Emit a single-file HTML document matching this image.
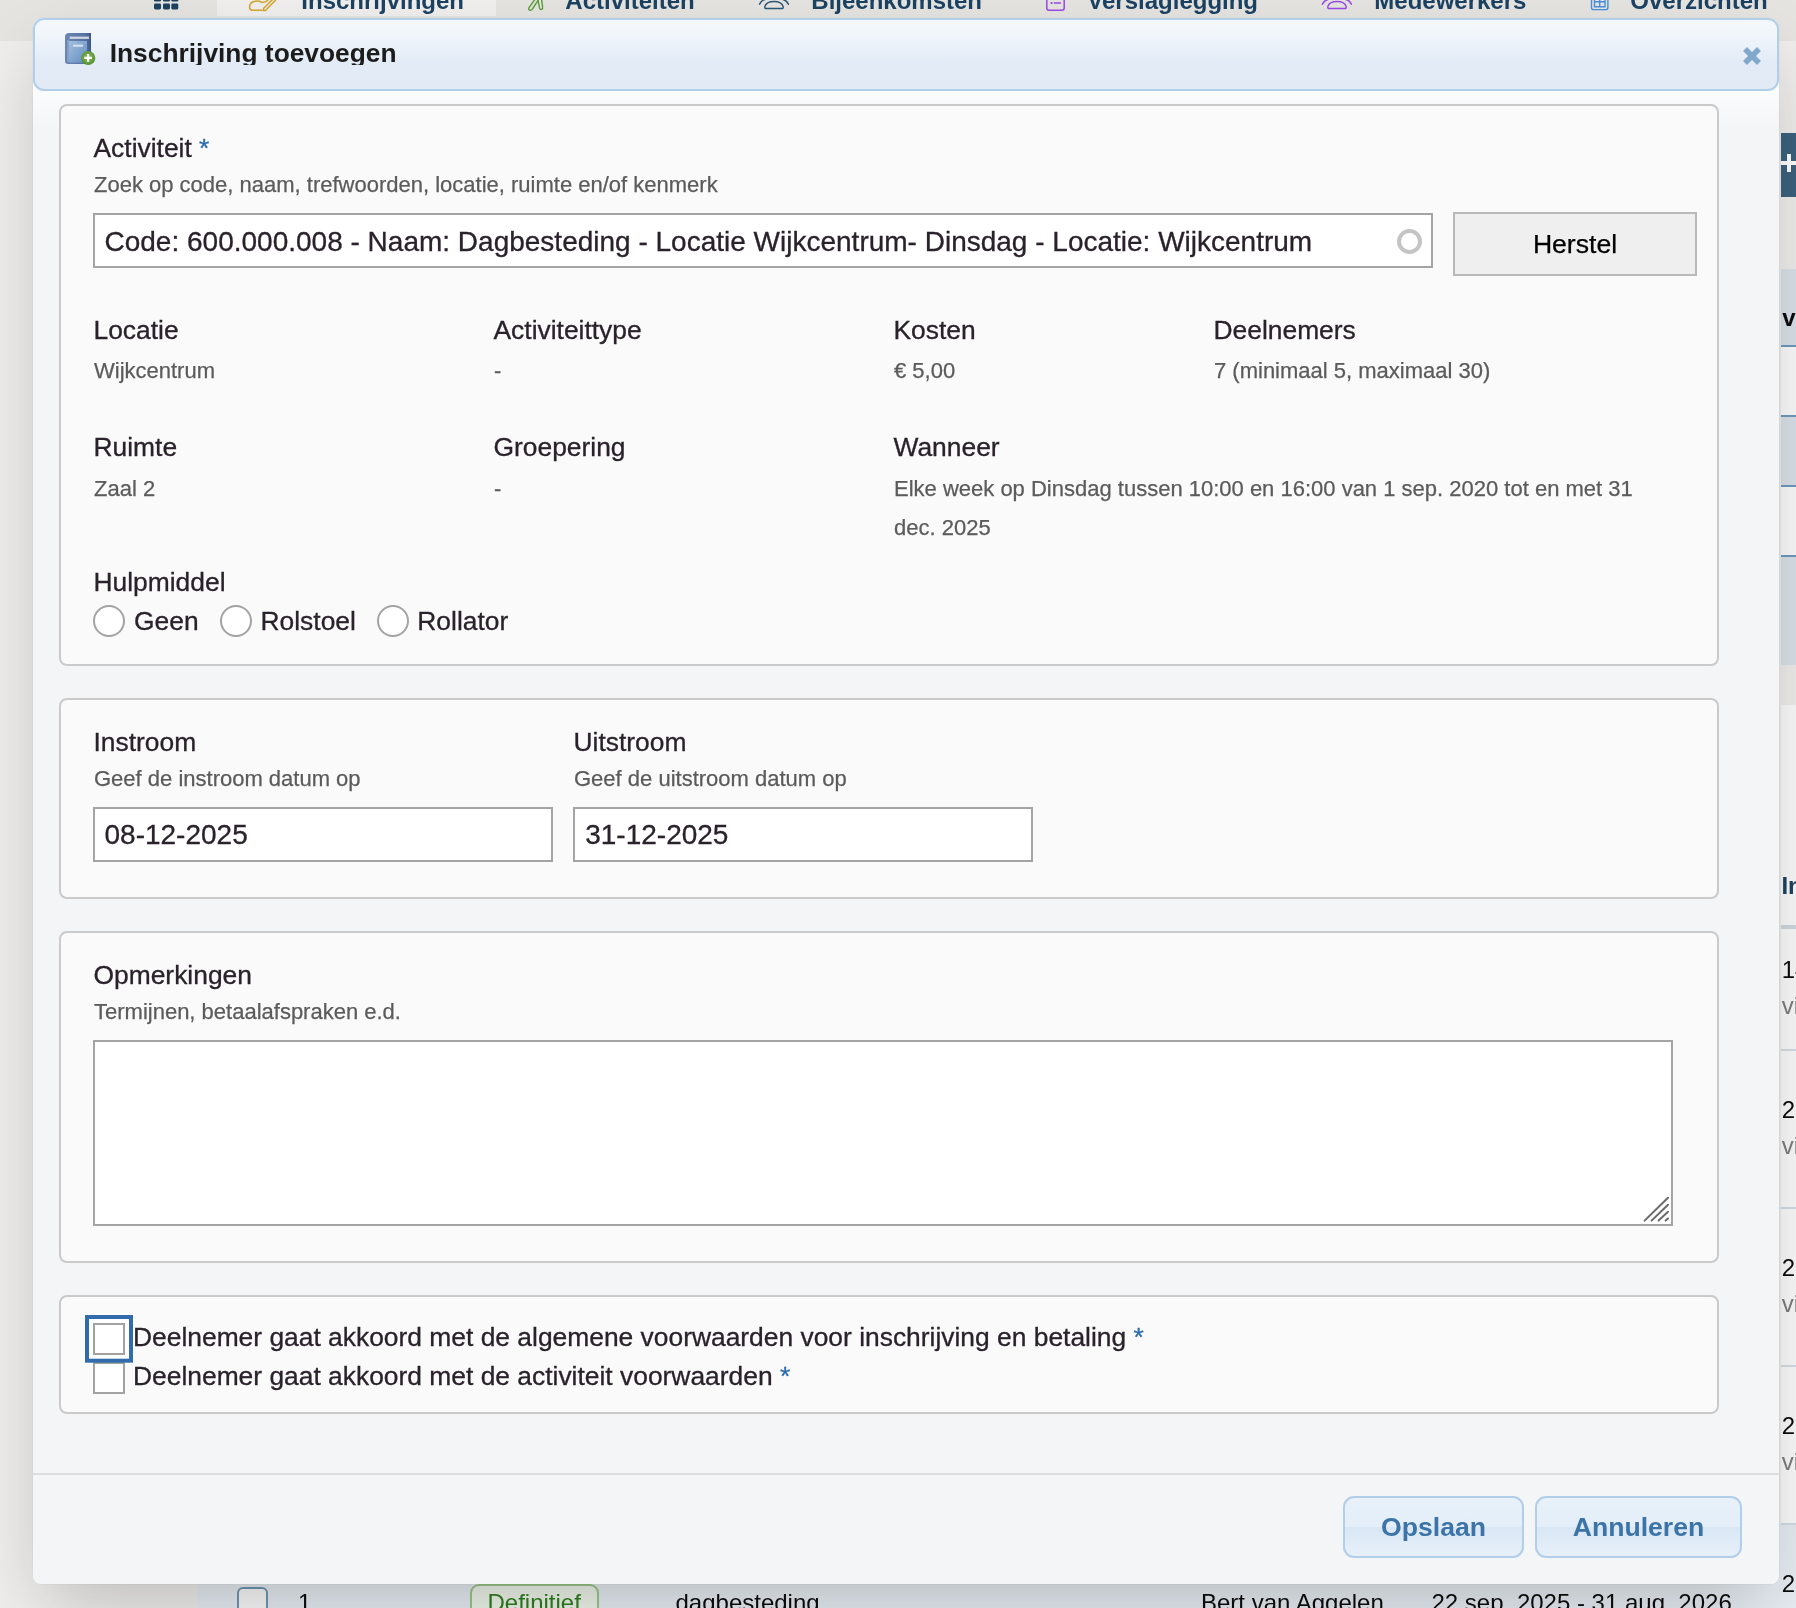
<!DOCTYPE html>
<html lang="nl">
<head>
<meta charset="utf-8">
<title>Inschrijving toevoegen</title>
<style>
*{box-sizing:border-box;margin:0;padding:0}
html,body{width:1796px;height:1608px;overflow:hidden}
body{position:relative;background:#efeeec;font-family:"Liberation Sans",sans-serif;color:#2a222b}
.abs{position:absolute;white-space:nowrap}
/* ---------- page behind the dialog ---------- */
#topbar{left:0;top:0;width:1796px;height:40.5px;background:#e5e4e1}
#tabact{left:217px;top:0;width:279px;height:16px;background:#f0efed}
.nav{font-weight:bold;font-size:24px;line-height:28px;color:#1c4263;top:-13px;margin-left:-.7px}
#strip{left:1781px;top:0;width:15px;height:1608px;overflow:hidden}
#strip div{position:absolute;left:0;width:15px;white-space:nowrap}
#strip .t{left:.7px;font-size:24px;line-height:28px;color:#0c0c0c}
#strip .g{color:#7c7c7c}
#rowbot{left:197px;top:1524px;width:1584px;height:84px;background:#e7edf3}
.cell{font-size:24px;line-height:28px;color:#0c0c0c;top:1589px}
/* ---------- dialog ---------- */
#dlg{left:33px;top:18px;width:1746px;height:1566px;border-radius:11px 11px 8px 8px;
 background:linear-gradient(#fbfcfe 0,#fbfcfe 72px,#f3f5f7 112px,#f3f5f7 100%);
 box-shadow:0 0 2px rgba(0,0,0,.09),0 30px 70px -12px rgba(0,0,0,.22)}
#hdr{left:33px;top:18px;width:1746px;height:73px;border:2px solid #b0cfe9;border-radius:11px;
 background:linear-gradient(#f4f8fc 0,#f1f6fb 14px,#e2ebf6 42px,#e1eaf5 100%)}
#title{left:109.7px;top:36px;height:29px;overflow:hidden;font-weight:bold;font-size:26.35px;line-height:34px;color:#1c1c1c}
.fs{border:2px solid #cacaca;border-radius:8px;background:#fafafa;left:59px;width:1660px}
.lbl{-webkit-text-stroke:.3px;font-size:26.4px;line-height:30px;color:#2a222b}
.hint{-webkit-text-stroke:.25px;font-size:22px;line-height:26px;color:#5b5b5b}
.req{color:#2a6ab0}
.inp{background:#fff;border:2px solid #a4a4a4;height:55px}
.itx{-webkit-text-stroke:.3px;font-size:28px;line-height:32px;color:#2a222b}
.radio{width:32px;height:32px;border-radius:50%;border:2px solid #a3a3a3;background:#fff}
.chk{width:32px;height:32px;border:2px solid #a2a2a2;background:#fff;left:93px}
#foot{left:33px;top:1473px;width:1746px;height:2px;background:#dcdddf}
.btn{top:1496px;height:62px;border:2px solid #b2cee8;border-radius:11px;text-align:center;
 font-weight:bold;font-size:26.6px;line-height:58px;color:#3d74a8;
 background:linear-gradient(#e8f1fa 0,#e3eef8 49%,#d9e7f5 51%,#e7f0f9 100%)}
</style>
</head>
<body><div id="wrap" style="position:absolute;left:0;top:0;width:1796px;height:1608px;will-change:opacity;">

<!-- page behind -->
<div class="abs" id="topbar"></div>
<div class="abs" id="tabact"></div>
<svg class="abs" style="left:0;top:0" width="1796" height="17" viewBox="0 0 1796 17">
<g fill="#1d4361"><rect x="154" y="-5" width="7" height="6.6" rx="1.4"/><rect x="163" y="-5" width="7" height="6.6" rx="1.4"/><rect x="171.3" y="-5" width="7" height="6.6" rx="1.4"/>
<rect x="154" y="3.4" width="7" height="6" rx="1.4"/><rect x="163" y="3.4" width="7" height="6" rx="1.4"/><rect x="171.3" y="3.4" width="7" height="6" rx="1.4"/></g>
<g fill="none" stroke="#d3a62c" stroke-width="1.5" stroke-linecap="round" stroke-linejoin="round"><path d="M262 10.2 H252.5 Q249.4 10 249.6 6.5 Q250 1.8 255.5 1.2 Q259 .8 261 2 Q264.5 3.2 268 0"/><path d="M276.6 -1 L265.5 10.4 L263.3 10.6 L263.7 8.3 L274 -2"/></g>
<g fill="none" stroke="#5a9e3a" stroke-width="1.4" stroke-linejoin="round"><path d="M536 -2 L529 7.6 Q528 9.6 529.8 10.2 Q531.4 10.6 532.4 9 L539 -1 Z"/><path d="M537.5 -2 L539.6 8.2 Q540.2 9.8 541.6 9.4 Q543 8.8 542.6 7.2 L541.4 -2 Z"/></g>
<g fill="none" stroke="#2a5878" stroke-width="1.5" stroke-linecap="round"><path d="M766.3 8.6 H781.7 Q783.6 8.6 783.1 6.4 Q781.6 1.4 774 1.4 Q766.4 1.4 764.9 6.4 Q764.4 8.6 766.3 8.6 Z"/><path d="M759.6 4.2 Q761.2 0.4 765.6 -0.8"/><path d="M788.4 4.2 Q786.8 0.4 782.4 -0.8"/></g>
<g fill="none" stroke="#9a4ae6" stroke-width="1.5" stroke-linecap="round"><path d="M1046.8 -3 V8 Q1046.8 10.2 1049 10.2 H1062 Q1064.2 10.2 1064.2 8 V-3"/><path d="M1054.4 3 H1060.4"/><path d="M1051.4 3 h.2" stroke-width="2"/>
<path d="M1329.3 8.6 H1344.7 Q1346.6 8.6 1346.1 6.4 Q1344.6 1.4 1337 1.4 Q1329.4 1.4 1327.9 6.4 Q1327.4 8.6 1329.3 8.6 Z"/><path d="M1322.4 4.2 Q1324 0.4 1328.4 -0.8"/><path d="M1351.4 4.2 Q1349.8 0.4 1345.4 -0.8"/></g>
<g fill="none" stroke="#4a8fdc" stroke-width="1.4"><path d="M1591.5 -3 V7.4 Q1591.5 9.6 1593.7 9.6 H1605.7 Q1607.9 9.6 1607.9 7.4 V-3"/><path d="M1594.5 -3 V6.8 H1605 V-3 M1594.5 1.8 H1605 M1599.7 -3 V6.8"/></g>
</svg>
<div class="abs nav" style="left:302px">Inschrijvingen</div>
<div class="abs nav" style="left:566px">Activiteiten</div>
<div class="abs nav" style="left:812px">Bijeenkomsten</div>
<div class="abs nav" style="left:1088px">Verslaglegging</div>
<div class="abs nav" style="left:1375px">Medewerkers</div>
<div class="abs nav" style="left:1631px">Overzichten</div>

<div class="abs" id="strip">
<div style="top:133px;height:64px;background:#3c627e"></div>
<div style="top:161.2px;height:3.6px;background:#fff"></div>
<div style="top:154px;height:18px;left:6.3px;width:3.6px;background:#fff"></div>
<div style="top:269px;height:76px;background:#dae1e8"></div>
<div class="t" style="top:303.6px;font-weight:bold;left:1.2px">v</div>
<div style="top:345px;height:2px;background:#6f9abf"></div>
<div style="top:347px;height:68px;background:#fbfbfb"></div>
<div style="top:415px;height:2px;background:#6f9abf"></div>
<div style="top:417px;height:68px;background:#dae1e8"></div>
<div style="top:485px;height:2px;background:#6f9abf"></div>
<div style="top:487px;height:68px;background:#fbfbfb"></div>
<div style="top:555px;height:2px;background:#6f9abf"></div>
<div style="top:557px;height:108px;background:#dae1e8"></div>
<div style="top:705px;height:819px;background:#fbfbfb"></div>
<div class="t" style="top:871.7px;font-weight:bold;color:#1c4263;left:.4px">In</div>
<div style="top:925px;height:4px;background:#d0d9df"></div>
<div class="t" style="top:955.7px">14</div>
<div class="t g" style="top:991.7px">vi</div>
<div style="top:1049px;height:2px;background:#d3dde5"></div>
<div class="t" style="top:1095.7px">22</div>
<div class="t g" style="top:1131.7px">vi</div>
<div style="top:1207px;height:2px;background:#d3dde5"></div>
<div class="t" style="top:1253.7px">22</div>
<div class="t g" style="top:1289.7px">vi</div>
<div style="top:1365px;height:2px;background:#d3dde5"></div>
<div class="t" style="top:1411.7px">22</div>
<div class="t g" style="top:1447.7px">vi</div>
<div style="top:1523px;height:2px;background:#d3dde5"></div>
<div style="top:1525px;height:83px;background:#e7edf3"></div>
<div class="t" style="top:1569.7px">22</div>
</div>
<div class="abs" id="rowbot"></div>
<div class="abs" style="left:237px;top:1587px;width:31px;height:31px;border:2px solid #6f98b6;border-radius:6px;background:#fafafa"></div>
<div class="abs cell" style="left:298px">1</div>
<div class="abs" style="left:470px;top:1584px;width:129px;height:38px;border:2px solid #9cc78b;border-radius:9px;background:#eef5ea"></div>
<div class="abs cell" style="left:487.5px;color:#2f7f20">Definitief</div>
<div class="abs cell" style="left:675.5px">dagbesteding</div>
<div class="abs cell" style="left:1201px">Bert van Aggelen</div>
<div class="abs cell" style="left:1431.5px">22 sep. 2025 - 31 aug. 2026</div>

<!-- dialog -->
<div class="abs" id="dlg"></div>
<div class="abs" id="hdr"></div>
<div class="abs" id="title">Inschrijving toevoegen</div>
<svg class="abs" id="bookico" style="left:62px;top:30px;filter:blur(.45px)" width="40" height="40" viewBox="0 0 40 40">
<defs>
<linearGradient id="bk1" x1="0" y1="0" x2="1" y2="1"><stop offset="0" stop-color="#a3bedc"/><stop offset="1" stop-color="#5f8cc2"/></linearGradient>
<linearGradient id="bk2" x1="0" y1="0" x2="1" y2="0"><stop offset="0" stop-color="#6b86b6"/><stop offset=".8" stop-color="#56719f"/><stop offset="1" stop-color="#3c568a"/></linearGradient>
<radialGradient id="gr1" cx=".5" cy=".45" r=".6"><stop offset="0" stop-color="#8fc15c"/><stop offset="1" stop-color="#4f8a30"/></radialGradient>
</defs>
<path d="M3 7 Q3 3 7 3 H29 V34 H6 Q3 34 3 31 Z" fill="url(#bk2)"/>
<rect x="7" y="11" width="18" height="21.6" fill="url(#bk1)"/>
<rect x="5" y="10" width="2" height="22" fill="#8aa5cc" opacity=".8"/>
<rect x="7.6" y="6.6" width="19.4" height="2.3" fill="#cfd5e2"/>
<rect x="11" y="14.6" width="10" height="2.2" fill="#d4dfee"/>
<circle cx="26.2" cy="28" r="7.1" fill="url(#gr1)"/>
<path d="M22.3 26.8h2.7v-2.7h2.2v2.7h2.7v2.2h-2.7v2.7h-2.2v-2.7h-2.7z" fill="#fff" style="filter:blur(.45px)"/>
</svg>
<svg class="abs" id="closex" style="left:1740px;top:44px;filter:blur(.5px)" width="24" height="24" viewBox="0 0 24 24">
<path d="M5 5 L19 19 M19 5 L5 19" stroke="#82a8cc" stroke-width="5.6" fill="none"/>
</svg>

<!-- fieldset 1 -->
<div class="abs fs" style="top:104px;height:562px"></div>
<div class="abs lbl" style="left:93.5px;top:133px">Activiteit <span class="req">*</span></div>
<div class="abs hint" style="left:94px;top:172px">Zoek op code, naam, trefwoorden, locatie, ruimte en/of kenmerk</div>
<div class="abs inp" style="left:93px;top:213px;width:1340px;height:55px"></div>
<div class="abs itx" style="left:104.5px;top:225.5px">Code: 600.000.008 - Naam: Dagbesteding - Locatie Wijkcentrum- Dinsdag - Locatie: Wijkcentrum</div>

<div class="abs" style="left:1397px;top:229px;width:25px;height:25px;border-radius:50%;border:4px solid #c4c4c4;filter:blur(.5px)"></div>
<div class="abs" id="herstel" style="left:1453px;top:212px;width:244px;height:64px;border:2px solid #b9b9b9;background:#efefef"></div>
<div class="abs" style="left:1453px;top:212px;width:244px;text-align:center;font-size:26.6px;line-height:64px;color:#000;-webkit-text-stroke:.25px">Herstel</div>
<div class="abs lbl" style="left:93.5px;top:315px">Locatie</div>
<div class="abs hint" style="left:94px;top:358px">Wijkcentrum</div>
<div class="abs lbl" style="left:493.5px;top:315px">Activiteittype</div>
<div class="abs hint" style="left:494px;top:358px">-</div>
<div class="abs lbl" style="left:893.5px;top:315px">Kosten</div>
<div class="abs hint" style="left:894px;top:358px">€ 5,00</div>
<div class="abs lbl" style="left:1213.5px;top:315px">Deelnemers</div>
<div class="abs hint" style="left:1214px;top:358px">7 (minimaal 5, maximaal 30)</div>

<div class="abs lbl" style="left:93.5px;top:432px">Ruimte</div>
<div class="abs hint" style="left:94px;top:476px">Zaal 2</div>
<div class="abs lbl" style="left:493.5px;top:432px">Groepering</div>
<div class="abs hint" style="left:494px;top:476px">-</div>
<div class="abs lbl" style="left:893.5px;top:432px">Wanneer</div>
<div class="abs hint" style="left:894px;top:476px">Elke week op Dinsdag tussen 10:00 en 16:00 van 1 sep. 2020 tot en met 31</div>
<div class="abs hint" style="left:894px;top:515px">dec. 2025</div>

<div class="abs lbl" style="left:93.5px;top:566.5px">Hulpmiddel</div>
<div class="abs radio" style="left:93px;top:605px"></div>
<div class="abs lbl" style="left:134px;top:605.6px">Geen</div>
<div class="abs radio" style="left:220px;top:605px"></div>
<div class="abs lbl" style="left:260.5px;top:605.6px">Rolstoel</div>
<div class="abs radio" style="left:377px;top:605px"></div>
<div class="abs lbl" style="left:417.3px;top:605.6px">Rollator</div>

<!-- fieldset 2 -->
<div class="abs fs" style="top:698px;height:201px"></div>
<div class="abs lbl" style="left:93.5px;top:727px">Instroom</div>
<div class="abs hint" style="left:94px;top:766px">Geef de instroom datum op</div>
<div class="abs inp" style="left:93px;top:807px;width:460px"></div>
<div class="abs itx" style="left:104.5px;top:818.5px">08-12-2025</div>
<div class="abs lbl" style="left:573.5px;top:727px">Uitstroom</div>
<div class="abs hint" style="left:574px;top:766px">Geef de uitstroom datum op</div>
<div class="abs inp" style="left:573px;top:807px;width:460px"></div>
<div class="abs itx" style="left:585.2px;top:818.5px">31-12-2025</div>

<!-- fieldset 3 -->
<div class="abs fs" style="top:931px;height:332px"></div>
<div class="abs lbl" style="left:93.5px;top:959.7px">Opmerkingen</div>
<div class="abs hint" style="left:94px;top:999px">Termijnen, betaalafspraken e.d.</div>
<div class="abs inp" style="left:93px;top:1040px;width:1580px;height:186px"></div>
<svg class="abs" style="left:1640px;top:1192px" width="32" height="32" viewBox="1640 1192 32 32"><path d="M1644.6 1220.6 L1668 1197.8 M1651.6 1220.6 L1668 1204.8 M1658.6 1220.6 L1668 1211.8 M1665.6 1220.6 L1668 1218.4" stroke="#6a6a6a" stroke-width="2" stroke-linecap="round" fill="none"/></svg>

<!-- fieldset 4 -->
<div class="abs fs" style="top:1295px;height:119px"></div>
<div class="abs" style="left:84px;top:1314px;width:50px;height:49px;background:#fff"></div>
<div class="abs chk" style="top:1362px"></div>
<svg class="abs" style="left:84px;top:1314px" width="50" height="50" viewBox="84 1314 50 50"><rect x="87" y="1317" width="44" height="43.7" fill="#fff" stroke="#2f6bad" stroke-width="4"/></svg>
<div class="abs chk" style="top:1323px"></div>
<div class="abs lbl" style="left:133px;top:1322px">Deelnemer gaat akkoord met de algemene voorwaarden voor inschrijving en betaling <span class="req">*</span></div>
<div class="abs lbl" style="left:133px;top:1361px">Deelnemer gaat akkoord met de activiteit voorwaarden <span class="req">*</span></div>

<!-- footer -->
<div class="abs" id="foot"></div>
<div class="abs btn" style="left:1343px;width:181px">Opslaan</div>
<div class="abs btn" style="left:1535px;width:207px">Annuleren</div>

</div></body>
</html>
